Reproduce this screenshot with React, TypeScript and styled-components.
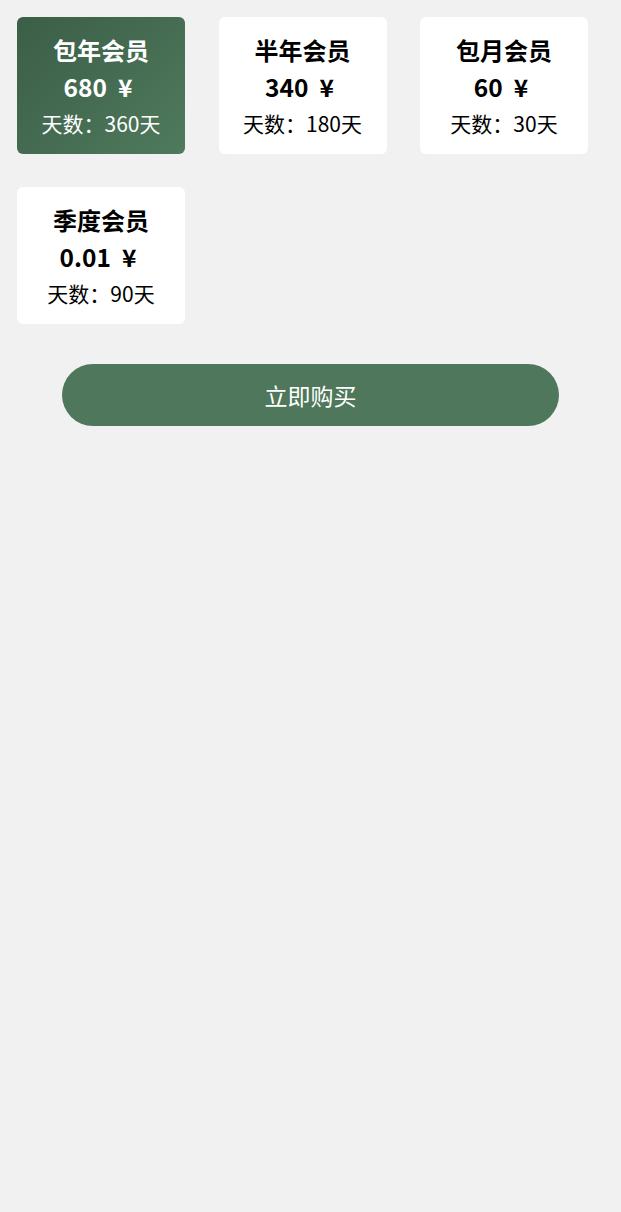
import React, { useState } from "react";
import styled, { createGlobalStyle, css } from "styled-components";

const GlobalStyle = createGlobalStyle`
  html, body {
    margin: 0;
    padding: 0;
    background: #f1f1f1;
    font-family: "Noto Sans CJK SC", "Noto Sans", sans-serif;
  }
`;

const Page = styled.div`
  min-height: 1212px;
  background: #f1f1f1;
  padding: 17px 0 0 17px;
  box-sizing: border-box;
`;

const Grid = styled.div`
  display: grid;
  grid-template-columns: repeat(3, 168px);
  column-gap: 33.5px;
  row-gap: 33px;
`;

const Card = styled.div<{ $active: boolean }>`
  height: 137px;
  box-sizing: border-box;
  border-radius: 6px;
  padding-top: 14px;
  display: flex;
  flex-direction: column;
  align-items: center;
  background: #ffffff;
  color: #000000;
  cursor: pointer;
  ${(p) =>
    p.$active &&
    css`
      background: linear-gradient(135deg, #3b5e47 0%, #4f7a5d 100%);
      color: #ffffff;
    `}
`;

const Title = styled.div`
  font-size: 24px;
  font-weight: 700;
  line-height: 37px;
`;

const Price = styled.div`
  font-size: 24.5px;
  font-weight: 700;
  line-height: 37px;
  white-space: pre;
  margin-left: -6px;
`;

const Days = styled.div`
  font-size: 21px;
  line-height: 37px;
`;

const BuyButton = styled.button`
  display: block;
  width: 497px;
  height: 62px;
  margin: 40px 0 0 45px;
  border: none;
  border-radius: 31px;
  background: #4e775b;
  color: #ffffff;
  font-family: "Noto Sans CJK SC", "Noto Sans", sans-serif;
  font-size: 23px;
  cursor: pointer;
`;

const plans = [
  { title: "包年会员", price: "680", days: 360 },
  { title: "半年会员", price: "340", days: 180 },
  { title: "包月会员", price: "60", days: 30 },
  { title: "季度会员", price: "0.01", days: 90 },
];

export default function App() {
  const [active, setActive] = useState(0);
  return (
    <Page>
      <GlobalStyle />
      <Grid>
        {plans.map((p, i) => (
          <Card key={p.title} $active={active === i} onClick={() => setActive(i)}>
            <Title>{p.title}</Title>
            <Price>{`${p.price}  ¥`}</Price>
            <Days>{`天数：${p.days}天`}</Days>
          </Card>
        ))}
      </Grid>
      <BuyButton>立即购买</BuyButton>
    </Page>
  );
}
